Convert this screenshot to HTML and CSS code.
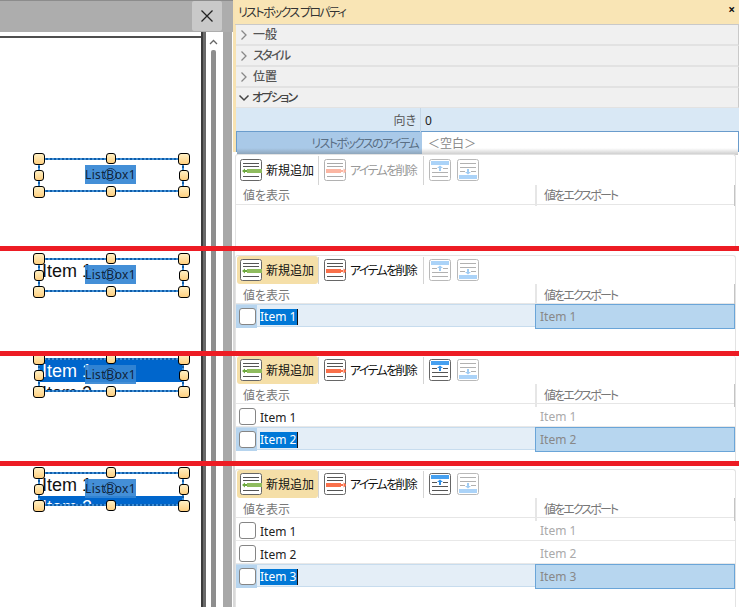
FILE: index.html
```html
<!DOCTYPE html>
<html lang="ja">
<head>
<meta charset="utf-8">
<title>リストボックス プロパティ</title>
<link rel="stylesheet" href="styles.css">
</head>
<body>
<svg class="defs" width="0" height="0" aria-hidden="true">
  <symbol id="i-add" viewBox="0 0 22 22">
    <rect x=".5" y=".5" width="21" height="21" rx="2" fill="#fff" stroke="#666"/>
    <path d="M3 4.500h16M3 7.500h16M3 17.500h16" stroke="#555" fill="none"/>
    <path d="M7 10h15v4H7z" fill="#8fbc5e"/>
    <path d="M2 12l3-2.500v5zM4 11h3v2H4z" fill="#6aa83c"/>
  </symbol>
  <symbol id="i-del" viewBox="0 0 22 22">
    <rect x=".5" y=".5" width="21" height="21" rx="2" fill="#fff" stroke="#666"/>
    <path d="M3 4.500h16M3 7.500h16M3 17.500h16" stroke="#555" fill="none"/>
    <path d="M2 10h15v4H2z" fill="#f9704a"/>
    <path d="M23 12l-3.500-2.500v5zM17 11h3v2h-3z" fill="#f9704a"/>
  </symbol>
  <symbol id="i-up" viewBox="0 0 22 22">
    <rect x=".5" y=".5" width="21" height="21" rx="2" fill="#fff" stroke="#666"/>
    <path d="M2 2h18v4H2z" fill="#46a0f0"/>
    <path d="M3 9.500h5M14 9.500h5M3 13.500h16M3 17.500h16" stroke="#555" fill="none"/>
    <path d="M11 6.500l-3 2.500h2v3h2V9h2z" fill="#2f8fe6"/>
  </symbol>
  <symbol id="i-down" viewBox="0 0 22 22">
    <rect x=".5" y=".5" width="21" height="21" rx="2" fill="#fff" stroke="#666"/>
    <path d="M2 16h18v4H2z" fill="#46a0f0"/>
    <path d="M3 4.500h16M3 8.500h16M3 12.500h5M14 12.500h5" stroke="#555" fill="none"/>
    <path d="M11 15.500l-3-2.500h2v-3h2v3h2z" fill="#2f8fe6"/>
  </symbol>
  <symbol id="i-right" viewBox="0 0 8 12"><path d="M1.500 1.500L6 6l-4.500 4.500" fill="none" stroke="#888" stroke-width="1.300"/></symbol>
  <symbol id="i-open" viewBox="0 0 12 8"><path d="M1.500 1.500L6 6l4.500-4.500" fill="none" stroke="#444" stroke-width="1.500"/></symbol>
</svg>

<main class="page">
  <!-- first capture -->
  <section class="strip s1">
    <div class="left">
      <div class="topbar">
        <button class="close" type="button" aria-label="閉じる">
          <svg viewBox="0 0 14 14" width="14" height="14"><path d="M1.500 1.500l11 11M12.500 1.500l-11 11" stroke="#222" stroke-width="1.300" fill="none"/></svg>
        </button>
      </div>
      <div class="work">
        <div class="canvas">
          <div class="frame-top"></div>
          <div class="sheet">
            <div class="widget w1">
              <div class="items"></div>
              <div class="label">List<span class="anchor">B</span>ox1</div>
              <i class="h c tl"></i><i class="h m tm"></i><i class="h c tr"></i><i class="h m ml"></i><i class="h m mr"></i><i class="h c bl"></i><i class="h m bm"></i><i class="h c br"></i>
            </div>
          </div>
        </div>
        <div class="edge"></div>
        <div class="track">
          <svg class="sb-up" viewBox="0 0 9 6" width="9" height="6"><path d="M1 5l3.500-3.500L8 5" fill="none" stroke="#666" stroke-width="1.300"/></svg>
          <div class="thumb"></div>
        </div>
        <div class="gutter"></div>
      </div>
    </div>
    <div class="right">
      <div class="props">
        <header class="title"><span class="kana">リストボックス プロパティ</span><span class="x">×</span></header>
        <div class="group"><svg class="chev" width="8" height="12"><use href="#i-right"/></svg><span>一般</span></div>
        <div class="group"><svg class="chev" width="8" height="12"><use href="#i-right"/></svg><span class="kana">スタイル</span></div>
        <div class="group"><svg class="chev" width="8" height="12"><use href="#i-right"/></svg><span>位置</span></div>
        <div class="group open"><svg class="chev" width="12" height="8"><use href="#i-open"/></svg><span class="kana">オプション</span></div>
        <div class="prop"><div class="pk">向き</div><div class="pv">0</div></div>
        <div class="prop active"><div class="pk kana">リストボックスのアイテム</div><div class="pv blank">＜空白＞</div></div>
      </div>
      <div class="lb lb1">
        <div class="toolbar">
          <div class="tbtn"><svg class="ico"><use href="#i-add"/></svg><span>新規追加</span></div>
          <div class="tbtn off"><svg class="ico"><use href="#i-del"/></svg><span class="kana">アイテムを削除</span></div>
          <div class="tbtn icons"><svg class="ico off"><use href="#i-up"/></svg><svg class="ico off"><use href="#i-down"/></svg></div>
        </div>
        <div class="head"><div>値を表示</div><div class="kana">値をエクスポート</div></div>
      </div>
    </div>
  </section>
  <div class="red"></div>

  <!-- second capture -->
  <section class="strip s2">
    <div class="left">
      <div class="work">
        <div class="canvas"><div class="sheet">
          <div class="widget w2">
            <div class="items"><div class="it">Item 1</div></div>
            <div class="label">List<span class="anchor">B</span>ox1</div>
            <i class="h c tl"></i><i class="h m tm"></i><i class="h c tr"></i><i class="h m ml"></i><i class="h m mr"></i><i class="h c bl"></i><i class="h m bm"></i><i class="h c br"></i>
          </div>
        </div></div>
        <div class="edge"></div>
        <div class="track"><div class="thumb"></div></div>
        <div class="gutter"></div>
      </div>
    </div>
    <div class="right">
      <div class="lb lb2">
        <div class="toolbar">
          <div class="tbtn hot"><svg class="ico"><use href="#i-add"/></svg><span>新規追加</span></div>
          <div class="tbtn"><svg class="ico"><use href="#i-del"/></svg><span class="kana">アイテムを削除</span></div>
          <div class="tbtn icons"><svg class="ico off"><use href="#i-up"/></svg><svg class="ico off"><use href="#i-down"/></svg></div>
        </div>
        <div class="head"><div>値を表示</div><div class="kana">値をエクスポート</div></div>
        <div class="row sel"><div class="cell-v"><span class="chk"></span><span class="txt"><span class="mark">Item 1</span></span></div><div class="cell-e">Item 1</div></div>
      </div>
    </div>
  </section>
  <div class="red"></div>

  <!-- third capture -->
  <section class="strip s3">
    <div class="left">
      <div class="work">
        <div class="canvas"><div class="sheet">
          <div class="widget w3">
            <div class="items"><div class="it on">Item 1</div><div class="it">Item 2</div></div>
            <div class="label">List<span class="anchor">B</span>ox1</div>
            <i class="h c tl"></i><i class="h m tm"></i><i class="h c tr"></i><i class="h m ml"></i><i class="h m mr"></i><i class="h c bl"></i><i class="h m bm"></i><i class="h c br"></i>
          </div>
        </div></div>
        <div class="edge"></div>
        <div class="track"><div class="thumb"></div></div>
        <div class="gutter"></div>
      </div>
    </div>
    <div class="right">
      <div class="lb lb3">
        <div class="toolbar">
          <div class="tbtn hot"><svg class="ico"><use href="#i-add"/></svg><span>新規追加</span></div>
          <div class="tbtn"><svg class="ico"><use href="#i-del"/></svg><span class="kana">アイテムを削除</span></div>
          <div class="tbtn icons"><svg class="ico"><use href="#i-up"/></svg><svg class="ico off"><use href="#i-down"/></svg></div>
        </div>
        <div class="head"><div>値を表示</div><div class="kana">値をエクスポート</div></div>
        <div class="row"><div class="cell-v"><span class="chk"></span><span class="txt">Item 1</span></div><div class="cell-e">Item 1</div></div>
        <div class="row sel"><div class="cell-v"><span class="chk"></span><span class="txt"><span class="mark">Item 2</span></span></div><div class="cell-e">Item 2</div></div>
      </div>
    </div>
  </section>
  <div class="red"></div>

  <!-- fourth capture -->
  <section class="strip s4">
    <div class="left">
      <div class="work">
        <div class="canvas"><div class="sheet">
          <div class="widget w4">
            <div class="items"><div class="it">Item 1</div><div class="it on">Item 2</div></div>
            <div class="label">List<span class="anchor">B</span>ox1</div>
            <i class="h c tl"></i><i class="h m tm"></i><i class="h c tr"></i><i class="h m ml"></i><i class="h m mr"></i><i class="h c bl"></i><i class="h m bm"></i><i class="h c br"></i>
          </div>
        </div></div>
        <div class="edge"></div>
        <div class="track"><div class="thumb"></div></div>
        <div class="gutter"></div>
      </div>
    </div>
    <div class="right">
      <div class="lb lb4">
        <div class="toolbar">
          <div class="tbtn hot"><svg class="ico"><use href="#i-add"/></svg><span>新規追加</span></div>
          <div class="tbtn"><svg class="ico"><use href="#i-del"/></svg><span class="kana">アイテムを削除</span></div>
          <div class="tbtn icons"><svg class="ico"><use href="#i-up"/></svg><svg class="ico off"><use href="#i-down"/></svg></div>
        </div>
        <div class="head"><div>値を表示</div><div class="kana">値をエクスポート</div></div>
        <div class="row"><div class="cell-v"><span class="chk"></span><span class="txt">Item 1</span></div><div class="cell-e">Item 1</div></div>
        <div class="row"><div class="cell-v"><span class="chk"></span><span class="txt">Item 2</span></div><div class="cell-e">Item 2</div></div>
        <div class="row sel"><div class="cell-v"><span class="chk"></span><span class="txt"><span class="mark">Item 3</span></span></div><div class="cell-e">Item 3</div></div>
      </div>
    </div>
  </section>
</main>
</body>
</html>
```
FILE: styles.css
```css
* { box-sizing: border-box; }
html, body { margin: 0; padding: 0; background: #fff; }
body { width: 739px; height: 607px; overflow: hidden; font: 12px/1.2 "Noto Sans", "Noto Sans CJK JP", sans-serif; font-feature-settings: "palt"; color: #222; }
.defs { position: absolute; }
.page { display: flex; flex-direction: column; width: 739px; height: 607px; }
.red { height: 5px; background: #ed1c24; flex: none; }
.strip { display: grid; grid-template-columns: 233px 506px; overflow: hidden; flex: none; }
.s1 { height: 246px; }
.s2 { height: 100px; }
.s3 { height: 105px; }
.s4 { height: 141px; }
.kana { letter-spacing: -1.65px; }

/* left side: document view */
.left { display: flex; flex-direction: column; height: 100%; min-width: 0; }
.topbar { height: 32px; flex: none; background: #adadad; border-top: 1px solid #8c8c8c; display: flex; justify-content: flex-end; padding: 0 11px 1px 0; }
.close { width: 30px; height: 30px; padding: 0; border: 0; border-radius: 2px; background: #c9c9c9; display: flex; align-items: center; justify-content: center; }
.work { flex: 1; display: flex; min-height: 0; }
.canvas { width: 201px; flex: none; display: flex; flex-direction: column; background: #fff; }
.frame-top { height: 6px; flex: none; background: #fff; border-bottom: 2px solid #4f4f4f; }
.sheet { flex: 1; position: relative; background: #fff; }
.edge { width: 5px; flex: none; background: linear-gradient(90deg, #3c3c3c 0 40%, #6a6a6a 40%); }
.track { width: 17px; flex: none; background: #fff; display: flex; flex-direction: column; align-items: center; padding-right: 2px; }
.s1 .track { padding-top: 7px; }
.sb-up { flex: none; margin-bottom: 5px; }
.thumb { width: 5px; flex: 1; background: #8e8e8e; }
.s1 .thumb { border-radius: 2px 2px 0 0; }
.gutter { width: 9px; flex: none; background: #a8a8a8; margin-right: 1px; }

/* selected list box on the page */
.widget { position: absolute; left: 38px; width: 146px; height: 34px; border: 2px dotted #0f5ca8; background: linear-gradient(#fff, #fff) padding-box, #3f8fd6 border-box; }
.w1 { top: 120px; }
.w2 { top: 7px; }
.w3 { top: 2px; }
.w4 { top: 6px; }
.items { position: absolute; inset: 0; overflow: hidden; font: 18px/22px "Liberation Sans", sans-serif; color: #111; }
.it { padding-left: 2px; height: 22px; white-space: nowrap; }
.it.on { background: #0066cc; color: #fff; }
.label { position: absolute; left: 45px; top: 5px; width: 51px; height: 19px; background: rgba(52, 134, 212, .92); color: #10243a; font-size: 12px; line-height: 20px; text-align: center; letter-spacing: .3px; white-space: nowrap; }
.anchor { display: inline-block; width: 13px; height: 13px; line-height: 11px; margin: 0 -2px; border: 1px solid #123a66; border-radius: 50%; text-align: center; letter-spacing: 0; }
.h { position: absolute; display: block; background: linear-gradient(#fff0c4, #ffd080); border: 1px solid #000; border-radius: 3px; }
.h.c { width: 12px; height: 12px; }
.h.m { width: 10px; height: 11px; }
.tl { left: -7px; top: -7px; }
.tm { left: 66px; top: -7px; }
.tr { left: 138px; top: -7px; }
.ml { left: -6px; top: 10px; }
.mr { left: 139px; top: 10px; }
.bl { left: -7px; top: 26px; }
.bm { left: 66px; top: 26px; }
.br { left: 138px; top: 26px; }

/* right side */
.right { display: flex; flex-direction: column; min-width: 0; background: #fff; }
.s2 .right, .s3 .right, .s4 .right { border-left: 2px solid #d9d9d9; }
.props { height: 152px; flex: none; background: #f8e3b2; padding-left: 3px; }
.title { height: 25px; display: flex; justify-content: space-between; align-items: center; margin-left: -1px; padding: 2px 4px 0 3px; color: #333; background: #f9e5b5; border-bottom: 1px solid #c9c9c9; }
.x { font-size: 12px; font-weight: 700; color: #111; line-height: 1; margin-bottom: 6px; }
.group { height: 21px; display: flex; align-items: center; gap: 5px; padding-left: 4px; background: #f0f0f0; border-bottom: 2px solid #e2e2e2; border-right: 1px solid #c9c9c9; color: #555; font-weight: 500; }
.group > span { padding-top: 2px; }
.group.open { height: 20px; gap: 2px; padding-left: 2px; color: #444; border-bottom-width: 1px; }
.prop { display: grid; grid-template-columns: 185px 1fr; height: 23px; background: #d9e8f5; }
.pk { text-align: right; padding: 0 4px 0 0; line-height: 26px; color: #555; border-right: 1px solid #c4d6e6; }
.pv { padding-left: 4px; line-height: 26px; color: #222; }
.prop.active { height: 21px; background: #fff; border: 1px solid #6a9ccc; }
.prop.active .pk { background: linear-gradient(#a9c9e8 70%, #8aa0b4); line-height: 23px; color: #5a6f85; border-right: 0; }
.prop.active .pv { background: linear-gradient(#fff 70%, #c8c8c8); line-height: 23px; padding-left: 6px; color: #888; }

/* list box items editor */
.lb { width: 501px; margin-left: 2px; background: #fff; border: 1px solid #e3e3e3; border-bottom: 0; border-radius: 3px 3px 0 0; flex: 1; }
.lb1 { margin-top: 2px; }
.lb1 .toolbar { height: 30px; }
.lb1 .head { line-height: 21px; }
.lb2 { margin-top: 4px; margin-left: 0; }
.lb3 { border-top: 0; margin-left: 0; }
.lb4 { margin-top: 3px; margin-left: 0; }
.toolbar { height: 28px; display: flex; align-items: stretch; }
.tbtn { display: flex; align-items: center; gap: 4px; padding: 0 3px; margin-left: 1px; border-radius: 3px; position: relative; color: #111; white-space: nowrap; }
.tbtn > span { padding-top: 2px; }
.tbtn:first-child { width: 81px; }
.tbtn:nth-child(2) { width: 105px; padding-left: 5px; margin-left: 1px; }
.tbtn:nth-child(2)::before, .tbtn:nth-child(2)::after { content: ""; position: absolute; top: 1px; bottom: 0; width: 1px; background: #d4d4d4; }
.tbtn:nth-child(2)::before { left: -1px; }
.tbtn:nth-child(2)::after { right: 0; }
.tbtn.hot { background: #f5dfa8; }
.tbtn.off { color: #999; }
.tbtn.off .ico { opacity: .5; }
.tbtn.icons { gap: 6px; padding-left: 5px; margin-left: 0; }
.ico { width: 22px; height: 22px; flex: none; overflow: visible; }
.ico.off { opacity: .45; }
.head { display: grid; grid-template-columns: 299px 1fr; height: 20px; border-bottom: 1px solid #e6e6e6; color: #777; line-height: 23px; }
.head > div { padding-left: 7px; }
.head > div.kana { letter-spacing: -1.9px; border-left: 2px solid #e6e6e6; border-right: 1px solid #c4c4c4; }
.row { display: grid; grid-template-columns: 299px 1fr; height: 23px; border-bottom: 1px solid #e8e8e8; }
.cell-v { display: flex; align-items: center; padding-left: 3px; }
.cell-e { padding-left: 5px; line-height: 25px; color: #aaa; }
.chk { width: 17px; height: 17px; flex: none; border: 1px solid #858585; border-radius: 3px; background: #fff; }
.txt { margin-left: 4px; color: #222; line-height: 16px; padding-top: 2px; }
.mark { display: inline-block; padding-right: 1px; background: #0078d7; color: #fff; border-right: 1px solid #111; }
.row.sel { background: #e4eef7; border-top: 1px solid #c7dcee; border-bottom: 1px solid #c7dcee; }
.row.sel .txt { padding-top: 1px; }
.row.sel .cell-v { background: linear-gradient(90deg, #b6d4ee 21px, transparent 21px); }
.row.sel .cell-e { background: #b7d6ef; margin: -1px 0; border: 1px solid #6aa5d8; color: #888; line-height: 23px; padding-left: 4px; }
```
